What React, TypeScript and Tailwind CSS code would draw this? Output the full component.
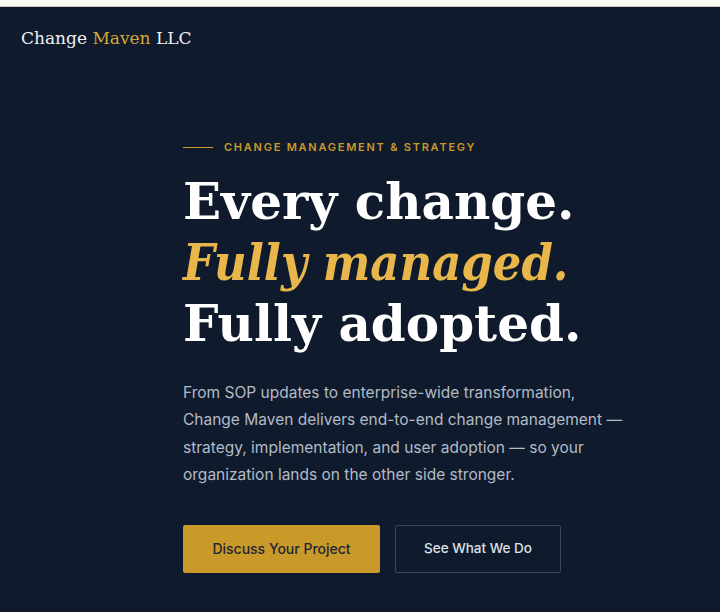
export default function App() {
  return (
    <div className="min-h-[612px] w-full bg-[#0f1b2d]" style={{ fontFamily: "Inter, 'Noto Sans', sans-serif" }}>
      <div className="h-[7px] bg-[#fcfaf5] border-b border-[#c9c6bf]" />
      <header className="px-[21px] pt-[20px]">
        <div className="text-[17px] leading-[22px] text-[#eef0f3]" style={{ fontFamily: "'DejaVu Serif', serif" }}>
          Change <span className="text-[#d4a838]">Maven</span> LLC
        </div>
      </header>
      <main className="pl-[183px] pt-[90px]">
        <div className="flex items-center gap-[11px]">
          <span className="block h-px w-[30px] bg-[#c9992a]" />
          <span className="text-[11px] font-semibold tracking-[0.16em] text-[#c9992a]">
            CHANGE MANAGEMENT &amp; STRATEGY
          </span>
        </div>
        <h1
          className="mt-[15px] text-[50px] leading-[61px] font-bold text-white"
          style={{ fontFamily: "'DejaVu Serif', serif" }}
        >
          <span className="block">Every change.</span>
          <span className="block italic font-stretch-condensed text-[#e8b64a]">Fully managed.</span>
          <span className="block">Fully adopted.</span>
        </h1>
        <p className="mt-[25px] w-[442px] text-[15.5px] leading-[27.5px] text-[#b3bac6]">
          From SOP updates to enterprise-wide transformation, Change Maven delivers end-to-end change management —
          strategy, implementation, and user adoption — so your organization lands on the other side stronger.
        </p>
        <div className="mt-[36px] flex gap-[15px]">
          <button className="h-[48px] w-[197px] rounded-[2px] bg-[#c9992a] text-[14px] font-medium text-[#1f2633]">
            Discuss Your Project
          </button>
          <button className="h-[48px] w-[166px] rounded-[2px] border border-[#3a4658] text-[13.5px] font-medium text-[#dde1e7]">
            See What We Do
          </button>
        </div>
      </main>
    </div>
  );
}
